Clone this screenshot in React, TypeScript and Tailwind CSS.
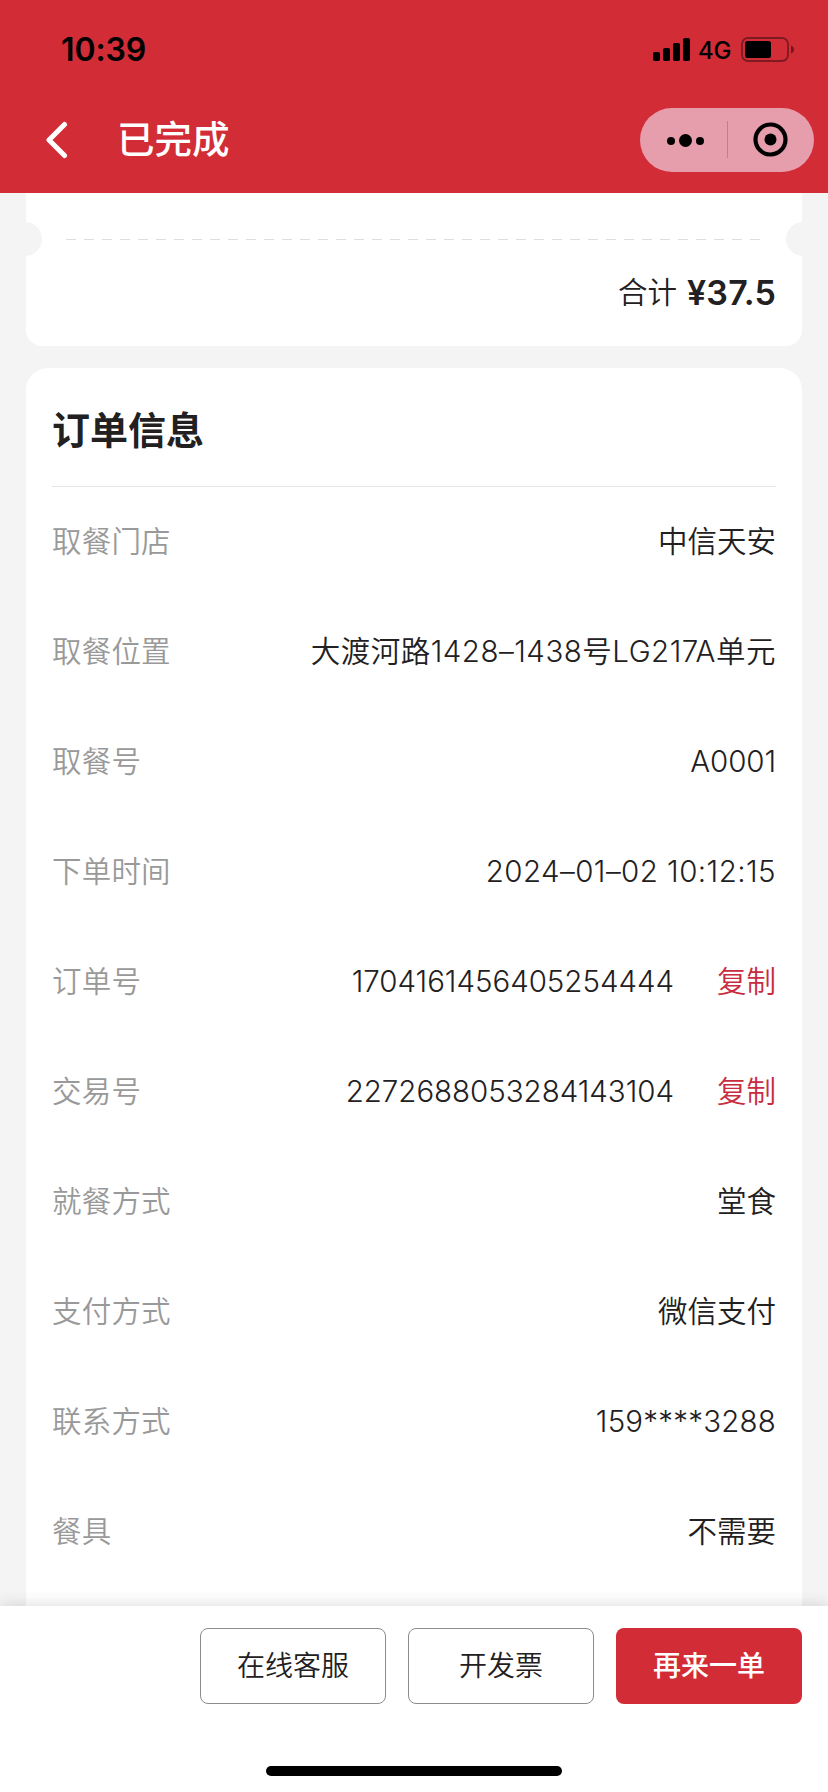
import type { ReactNode } from "react";
import { clsx } from "clsx";

type InfoRow = { label: string; value: string; tracking?: string; copyable?: boolean };

const rows: InfoRow[] = [
  { label: "取餐门店", value: "中信天安" },
  { label: "取餐位置", value: "大渡河路1428–1438号LG217A单元", tracking: "tracking-[0.5px]" },
  { label: "取餐号", value: "A0001", tracking: "tracking-[-0.1px]" },
  { label: "下单时间", value: "2024–01–02 10:12:15", tracking: "tracking-[0.45px]" },
  { label: "订单号", value: "1704161456405254444", tracking: "tracking-[-0.03px]", copyable: true },
  { label: "交易号", value: "2272688053284143104", tracking: "tracking-[-0.03px]", copyable: true },
  { label: "就餐方式", value: "堂食" },
  { label: "支付方式", value: "微信支付" },
  { label: "联系方式", value: "159****3288", tracking: "tracking-[0.2px]" },
  { label: "餐具", value: "不需要" },
];

function StatusBar() {
  return (
    <div className="flex h-[100px] items-center justify-between pl-[61px] pr-[33px]">
      <span className="text-[32px] font-semibold leading-none tracking-[-0.1px] text-black">10:39</span>
      <div className="flex items-center">
        <svg width="37" height="24" viewBox="0 0 37 24">
          <rect x="0" y="14" width="7" height="9" rx="1.8" />
          <rect x="10" y="10" width="7" height="13" rx="1.8" />
          <rect x="20" y="5" width="7" height="18" rx="1.8" />
          <rect x="30" y="0" width="7" height="23" rx="1.8" />
        </svg>
        <span className="ml-2 w-[34px] pt-0.5 text-2xl font-medium leading-none tracking-[-0.3px] text-black">4G</span>
        <svg className="ml-[9px]" width="54" height="26" viewBox="0 0 54 26">
          <rect x="1" y="1" width="46" height="23" rx="6" fill="none" stroke="#000" strokeOpacity=".4" strokeWidth="1.8" />
          <rect x="4" y="4" width="26" height="17" rx="2.5" />
          <path d="M50 8.5c4 1.2 4 6.8 0 8z" fillOpacity=".45" />
        </svg>
      </div>
    </div>
  );
}

function NavBar() {
  return (
    <div className="flex h-20 items-center pl-[45px] pr-[14px]">
      <svg width="24" height="38" viewBox="0 0 24 38" fill="none" stroke="#fff" strokeWidth="5" strokeLinecap="round" strokeLinejoin="round">
        <path d="M19.5 3.5 4 19 19.5 34.5" />
      </svg>
      <h1 className="ml-12 text-[37.5px] font-medium leading-none text-white">已完成</h1>
      <div className="ml-auto h-16 w-[174px] rounded-full bg-[#e69dac]">
        <svg width="174" height="64" viewBox="0 0 174 64">
          <circle cx="31" cy="33" r="4" />
          <circle cx="45.5" cy="32.5" r="6.5" />
          <circle cx="60" cy="33" r="4" />
          <path d="M87.5 13v37" stroke="#c67c8b" />
          <circle cx="130.5" cy="31.5" r="15" fill="none" stroke="#000" strokeWidth="4.2" />
          <circle cx="130.5" cy="31.5" r="6" />
        </svg>
      </div>
    </div>
  );
}

function TotalCard() {
  return (
    <section className="relative h-[153px] overflow-hidden rounded-b-2xl bg-white pt-[46px]">
      <span className="absolute -left-[18px] top-[29px] size-[34px] rounded-full bg-[#f4f4f4]" />
      <span className="absolute -right-[18px] top-[29px] size-[34px] rounded-full bg-[#f4f4f4]" />
      <div className="ml-10 h-px w-[695px] bg-[repeating-linear-gradient(90deg,#dedede_0_10px,transparent_10px_18px)]" />
      <div className="mt-[29px] flex h-12 items-center justify-end pr-[26px] text-[#222021]">
        <span className="text-[29.5px] font-[350] leading-none">合计</span>
        <span className="ml-[10px] text-[34px] font-semibold leading-none tracking-[0.2px]">¥37.5</span>
      </div>
    </section>
  );
}

function OrderInfoCard() {
  return (
    <section className="mt-[22px] flex-1 rounded-t-[22px] bg-white px-[26px]">
      <h2 className="flex h-[119px] items-center border-b border-[#e6e6e6] pt-1.5 text-[38px] font-bold leading-none text-[#222021]">
        订单信息
      </h2>
      {rows.map((row) => (
        <div key={row.label} className="flex h-[110px] items-center justify-between text-[29.5px] font-[350] leading-none">
          <span className="tracking-[0.2px] text-[#999]">{row.label}</span>
          <div className="flex items-center">
            <span className={clsx("whitespace-pre text-[#222021]", row.tracking)}>{row.value}</span>
            {row.copyable && (
              <button type="button" className="ml-[43px] text-[#c72c3f]">
                复制
              </button>
            )}
          </div>
        </div>
      ))}
    </section>
  );
}

function ActionButton({ primary, children }: { primary?: boolean; children: ReactNode }) {
  return (
    <button
      type="button"
      className={clsx(
        "h-[76px] w-[186px] rounded-lg text-[28px] leading-none",
        primary ? "bg-[#d22c37] font-medium text-white" : "border border-[#8c8c8c] bg-white font-[350] text-[#222021]"
      )}
    >
      {children}
    </button>
  );
}

export default function App() {
  return (
    <div className="flex h-[1792px] w-[828px] flex-col overflow-hidden bg-[#f4f4f4] font-[Inter,'Noto_Sans_CJK_SC',sans-serif]">
      <header className="h-[193px] shrink-0 bg-[#d22c37]">
        <StatusBar />
        <NavBar />
      </header>
      <main className="flex h-[1413px] shrink-0 flex-col overflow-hidden px-[26px]">
        <TotalCard />
        <OrderInfoCard />
      </main>
      <footer className="relative flex h-[186px] shrink-0 flex-col bg-white shadow-[0_-2px_14px_rgba(0,0,0,0.12)]">
        <div className="flex justify-end gap-[22px] px-[26px] pt-[22px]">
          <ActionButton>在线客服</ActionButton>
          <ActionButton>开发票</ActionButton>
          <ActionButton primary>再来一单</ActionButton>
        </div>
        <div className="mx-auto mb-4 mt-auto h-2.5 w-[296px] rounded-full bg-black" />
      </footer>
    </div>
  );
}
